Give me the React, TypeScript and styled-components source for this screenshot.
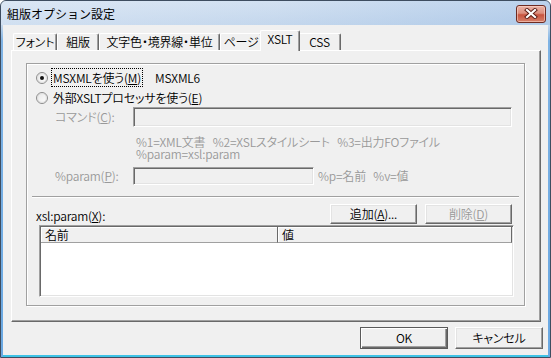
import React from "react";
import styled, { createGlobalStyle, css } from "styled-components";

const FONT = `"Noto Sans CJK JP", "Noto Sans", sans-serif`;
const GRAY_TEXT = "#999999";

const GlobalStyle = createGlobalStyle`
  html, body { margin: 0; padding: 0; background: #ffffff; }
  body { width: 551px; height: 358px; overflow: hidden; }
  * { box-sizing: border-box; }
`;

const Window = styled.div`
  width: 551px;
  height: 358px;
  display: flex;
  flex-direction: column;
  border: 1px solid #3e4d60;
  border-radius: 6px 6px 0 0;
  background: linear-gradient(to bottom, #dbe6f3 0px, #c6d8ec 24px, #7fb3e4 40px, #6aa8e2 100%);
  overflow: hidden;
  font-family: ${FONT};
  font-size: 12px;
  font-weight: 350;
  letter-spacing: -0.2px;
  color: #000;
  font-feature-settings: "palt" 1;
`;

const TitleBar = styled.div`
  height: 24px;
  flex: none;
  display: flex;
  align-items: center;
  justify-content: space-between;
  padding: 1px 4px 0 6px;
  background: linear-gradient(to right, rgba(220, 232, 246, 0.5) 0%, rgba(190, 212, 238, 0.3) 50%, rgba(150, 186, 228, 0.45) 100%);
`;

const Title = styled.div`
  font-size: 12px;
  line-height: 14px;
  font-weight: 400;
  letter-spacing: 0;
  font-feature-settings: normal;
  color: #000;
`;

const CloseButton = styled.div`
  width: 30px;
  height: 18px;
  border: 1px solid #6e2b22;
  border-radius: 3px;
  background: linear-gradient(to bottom, #eab2a5 0%, #dd8f7e 45%, #c8543f 55%, #d6806a 100%);
  box-shadow: inset 0 0 0 1px rgba(255, 220, 210, 0.55);
  display: flex;
  align-items: center;
  justify-content: center;
`;

const Client = styled.div`
  flex: 1;
  margin: 0 2px;
  background: #f0f0f0;
  border-bottom: 2px solid #3ec3e6;
  display: flex;
  flex-direction: column;
  padding: 5px 0 0 8px;
`;

const TabControl = styled.div`
  width: 530px;
  display: flex;
  flex-direction: column;
`;

const TabStrip = styled.div`
  height: 20px;
  display: flex;
  align-items: flex-end;
  padding-left: 2px;
  position: relative;
  z-index: 1;
`;

const Tab = styled.div<{ $w: number; $active?: boolean }>`
  width: ${(p) => p.$w}px;
  height: 17px;
  flex: none;
  display: flex;
  align-items: center;
  justify-content: center;
  background: #f0f0f0;
  border-top: 1px solid #ffffff;
  border-left: 1px solid #ffffff;
  border-right: 1px solid #696969;
  box-shadow: inset -1px 0 0 #a0a0a0;
  border-radius: 2px 2px 0 0;
  line-height: 14px;
  white-space: nowrap;
  ${(p) =>
    p.$active &&
    css`
      height: 21px;
      margin: 0 -2px -1px -2px;
      position: relative;
      z-index: 2;
      align-items: flex-start;
      padding-top: 1px;
    `}
`;

const Panel = styled.div`
  height: 272px;
  background: #f0f0f0;
  border-top: 1px solid #ffffff;
  border-left: 1px solid #ffffff;
  border-right: 1px solid #696969;
  border-bottom: 1px solid #696969;
  box-shadow: inset -1px -1px 0 #a0a0a0;
  padding: 12px 15px 0 14px;
`;

const GroupBox = styled.div`
  height: 243px;
  border: 1px solid #a0a0a0;
  box-shadow: inset 1px 1px 0 #ffffff, 1px 1px 0 #ffffff;
  display: flex;
  flex-direction: column;
  padding-top: 6px;
`;

const RadioRow = styled.div<{ $gap?: number }>`
  height: 16px;
  margin-top: ${(p) => p.$gap ?? 0}px;
  display: flex;
  align-items: center;
  padding-left: 9px;
  line-height: 14px;
`;

const RadioLabelCell = styled.div<{ $w?: number }>`
  margin-left: 4px;
  ${(p) => (p.$w ? `width: ${p.$w}px;` : "")}
  flex: none;
`;

const LabelText = styled.span<{ $focus?: boolean }>`
  padding: 0 1px;
  ${(p) => p.$focus && `outline: 1px dotted #000; outline-offset: 0px;`}
`;

const FieldRow = styled.div<{ $gap: number; $h: number }>`
  margin-top: ${(p) => p.$gap}px;
  height: ${(p) => p.$h}px;
  display: flex;
  align-items: center;
  padding-left: 28px;
  padding-right: 12px;
  line-height: 14px;
`;

const FieldLabel = styled.div`
  width: 78px;
  flex: none;
  color: ${GRAY_TEXT};
`;

const TextBox = styled.div<{ $w?: number }>`
  height: 100%;
  ${(p) => (p.$w ? `width: ${p.$w}px; flex: none;` : "flex: 1;")}
  background: #f0f0f0;
  border-style: solid;
  border-width: 1px;
  border-color: #a0a0a0 #ffffff #ffffff #a0a0a0;
  box-shadow: inset 1px 1px 0 #696969, inset -1px -1px 0 #e3e3e3;
`;

const Hint = styled.div`
  margin-left: 4px;
  color: ${GRAY_TEXT};
  white-space: pre;
`;

const Description = styled.div`
  margin-top: 9px;
  padding-left: 109px;
  line-height: 12px;
  color: ${GRAY_TEXT};
  white-space: pre;
`;

const Separator = styled.div`
  margin: 11px 5px 0 5px;
  height: 2px;
  border-top: 1px solid #a0a0a0;
  border-bottom: 1px solid #ffffff;
`;

const ListHeaderRow = styled.div`
  margin-top: 6px;
  height: 20px;
  display: flex;
  align-items: center;
  padding: 0 12px 0 9px;
  gap: 8px;
  line-height: 14px;
`;

const ListTitle = styled.div`
  flex: 1;
  padding-top: 4px;
`;

const PushButton = styled.div<{ $w: number; $h: number; $disabled?: boolean; $default?: boolean }>`
  width: ${(p) => p.$w}px;
  height: ${(p) => p.$h}px;
  flex: none;
  display: flex;
  align-items: center;
  justify-content: center;
  background: #f0f0f0;
  line-height: 14px;
  color: ${(p) => (p.$disabled ? GRAY_TEXT : "#000")};
  ${(p) =>
    p.$default
      ? css`
          border: 1px solid #5a5a5a;
          box-shadow: inset 1px 1px 0 #ffffff, inset -1px -1px 0 #696969, inset -2px -2px 0 #a0a0a0;
        `
      : css`
          border-style: solid;
          border-width: 1px;
          border-color: #ffffff #696969 #696969 #ffffff;
          box-shadow: inset -1px -1px 0 #a0a0a0, inset 1px 1px 0 #e3e3e3;
        `}
`;

const ListView = styled.div`
  margin: 1px 10px 0 12px;
  height: 72px;
  background: #ffffff;
  border-style: solid;
  border-width: 1px;
  border-color: #a0a0a0 #ffffff #ffffff #a0a0a0;
  box-shadow: inset 1px 1px 0 #696969, inset -1px -1px 0 #e3e3e3;
  padding: 1px 1px 1px 1px;
  display: flex;
  flex-direction: column;
`;

const HeaderRow = styled.div`
  height: 16px;
  display: flex;
  flex: none;
`;

const HeaderCell = styled.div<{ $w?: number }>`
  ${(p) => (p.$w ? `width: ${p.$w}px; flex: none;` : "flex: 1;")}
  height: 100%;
  background: #f0f0f0;
  border-right: 1px solid #696969;
  border-bottom: 1px solid #a0a0a0;
  box-shadow: inset 1px 1px 0 #ffffff;
  padding-left: 4px;
  line-height: 15px;
`;

const BottomBar = styled.div`
  margin-top: 5px;
  display: flex;
  justify-content: flex-end;
  gap: 7px;
  padding-right: 5px;
`;

const Key = styled.u`
  text-decoration: underline;
  text-underline-offset: 1px;
`;

const Radio: React.FC<{ checked?: boolean }> = ({ checked }) => (
  <svg width="12" height="12" viewBox="0 0 12 12" style={{ flex: "none" }}>
    <defs>
      <linearGradient id="rg" x1="0" y1="0" x2="1" y2="1">
        <stop offset="0" stopColor="#e6e6e6" />
        <stop offset="1" stopColor="#ffffff" />
      </linearGradient>
    </defs>
    <circle cx="6" cy="6" r="5.5" fill="url(#rg)" stroke="#8c8c8c" strokeWidth="1" />
    <circle cx="6" cy="6" r="4.4" fill="none" stroke="#dadada" strokeWidth="0.8" />
    {checked && <circle cx="6" cy="6" r="2" fill="#111" />}
  </svg>
);

const CloseGlyph: React.FC = () => (
  <svg width="14" height="11" viewBox="0 0 14 11">
    <path d="M3 2 L11 9 M11 2 L3 9" stroke="#5a1c14" strokeWidth="4" strokeLinecap="square" />
    <path d="M3 2 L11 9 M11 2 L3 9" stroke="#ffffff" strokeWidth="2.2" strokeLinecap="square" />
  </svg>
);

const tabs = [
  { label: "フォント", w: 44 },
  { label: "組版", w: 42 },
  { label: "文字色・境界線・単位", w: 121 },
  { label: "ページ", w: 42 },
  { label: "XSLT", w: 40, active: true },
  { label: "CSS", w: 43 },
];

export default function App() {
  return (
    <>
      <GlobalStyle />
      <Window>
        <TitleBar>
          <Title>組版オプション設定</Title>
          <CloseButton>
            <CloseGlyph />
          </CloseButton>
        </TitleBar>
        <Client>
          <TabControl>
            <TabStrip>
              {tabs.map((t) => (
                <Tab key={t.label} $w={t.w} $active={t.active}>
                  {t.label}
                </Tab>
              ))}
            </TabStrip>
            <Panel>
              <GroupBox>
                <RadioRow>
                  <Radio checked />
                  <RadioLabelCell $w={103}>
                    <LabelText $focus>
                      MSXMLを使う(<Key>M</Key>)
                    </LabelText>
                  </RadioLabelCell>
                  <span>MSXML6</span>
                </RadioRow>
                <RadioRow $gap={4}>
                  <Radio />
                  <RadioLabelCell>
                    <LabelText>
                      外部XSLTプロセッサを使う(<Key>E</Key>)
                    </LabelText>
                  </RadioLabelCell>
                </RadioRow>
                <FieldRow $gap={1} $h={20}>
                  <FieldLabel>
                    コマンド(<Key>C</Key>):
                  </FieldLabel>
                  <TextBox />
                </FieldRow>
                <Description>
                  {"%1=XML文書   %2=XSLスタイルシート   %3=出力FOファイル\n%param=xsl:param"}
                </Description>
                <FieldRow $gap={7} $h={18}>
                  <FieldLabel>
                    %param(<Key>P</Key>):
                  </FieldLabel>
                  <TextBox $w={181} />
                  <Hint>{"%p=名前   %v=値"}</Hint>
                </FieldRow>
                <Separator />
                <ListHeaderRow>
                  <ListTitle>
                    xsl:param(<Key>X</Key>):
                  </ListTitle>
                  <PushButton $w={87} $h={20}>
                    追加(<Key>A</Key>)...
                  </PushButton>
                  <PushButton $w={87} $h={20} $disabled>
                    削除(<Key>D</Key>)
                  </PushButton>
                </ListHeaderRow>
                <ListView>
                  <HeaderRow>
                    <HeaderCell $w={237}>名前</HeaderCell>
                    <HeaderCell>値</HeaderCell>
                  </HeaderRow>
                </ListView>
              </GroupBox>
            </Panel>
          </TabControl>
          <BottomBar>
            <PushButton $w={88} $h={22} $default>
              OK
            </PushButton>
            <PushButton $w={88} $h={22}>
              キャンセル
            </PushButton>
          </BottomBar>
        </Client>
      </Window>
    </>
  );
}
